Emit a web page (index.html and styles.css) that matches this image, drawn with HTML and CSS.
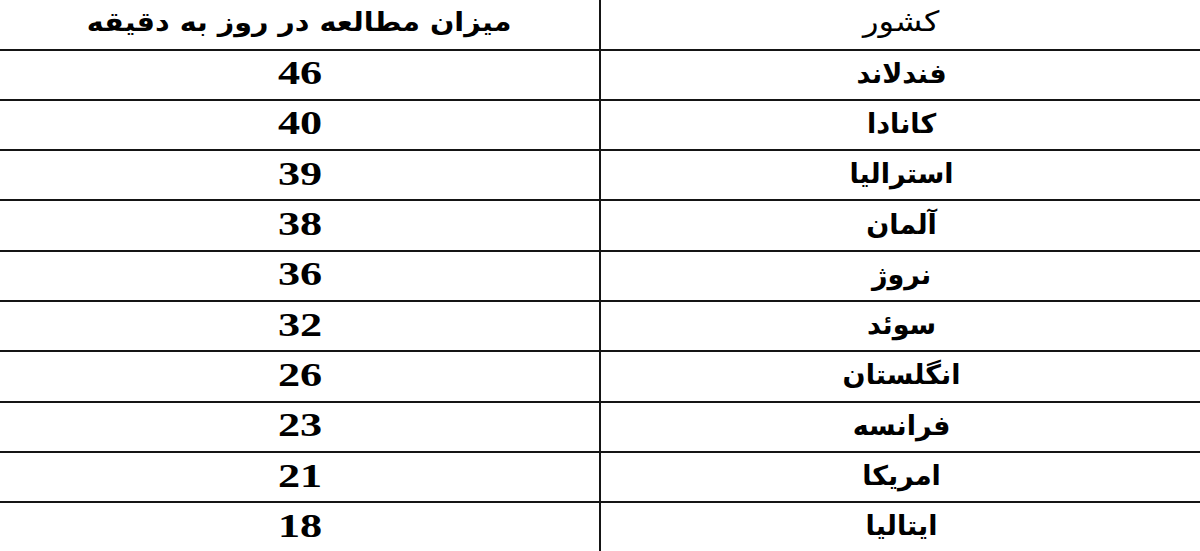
FILE: index.html
```html
<!DOCTYPE html>
<html lang="fa" dir="rtl">
<head>
<meta charset="utf-8">
<title>میزان مطالعه</title>
<link rel="stylesheet" href="styles.css">
</head>
<body>
<div class="table">
  <div class="cell name head"><span>کشور</span></div>
  <div class="cell num head"><span>میزان مطالعه در روز به دقیقه</span></div>

  <div class="cell name"><span>فندلاند</span></div><div class="cell num"><span>46</span></div>
  <div class="cell name"><span>کانادا</span></div><div class="cell num"><span>40</span></div>
  <div class="cell name"><span>استرالیا</span></div><div class="cell num"><span>39</span></div>
  <div class="cell name"><span>آلمان</span></div><div class="cell num"><span>38</span></div>
  <div class="cell name"><span>نروژ</span></div><div class="cell num"><span>36</span></div>
  <div class="cell name"><span>سوئد</span></div><div class="cell num"><span>32</span></div>
  <div class="cell name"><span>انگلستان</span></div><div class="cell num"><span>26</span></div>
  <div class="cell name"><span>فرانسه</span></div><div class="cell num"><span>23</span></div>
  <div class="cell name"><span>امریکا</span></div><div class="cell num"><span>21</span></div>
  <div class="cell name"><span>ایتالیا</span></div><div class="cell num"><span>18</span></div>
</div>
</body>
</html>
```

FILE: styles.css
```css
html, body {
  margin: 0;
  padding: 0;
  background: #ffffff;
  overflow: hidden;
  height: 551px;
}

.table {
  direction: rtl;
  display: grid;
  grid-template-columns: 601px 599px;
  grid-template-rows: 50.5px repeat(10, 50.3px);
  width: 1200px;
}

.cell {
  display: flex;
  align-items: center;
  justify-content: center;
  border-bottom: 2px solid #151515;
  color: #000;
  white-space: nowrap;
  padding-bottom: 3px;
}

.cell span {
  display: inline-block;
}

.name {
  border-left: 2px solid #151515;
  font-family: "DejaVu Sans", sans-serif;
  font-weight: bold;
  font-size: 27px;
  padding-left: 2px;
}

.num {
  font-family: "Liberation Serif", serif;
  font-weight: bold;
  font-size: 34px;
}

.num span {
  transform: scaleX(1.3);
}

.name.head {
  font-weight: normal;
  font-size: 28px;
  padding-bottom: 5px;
}

.name.head span {
  transform: scaleX(1.15);
}

.num.head {
  font-family: "DejaVu Sans", sans-serif;
  font-size: 26px;
  padding-bottom: 5px;
}

.num.head span {
  transform: scaleX(1.1);
}
```
